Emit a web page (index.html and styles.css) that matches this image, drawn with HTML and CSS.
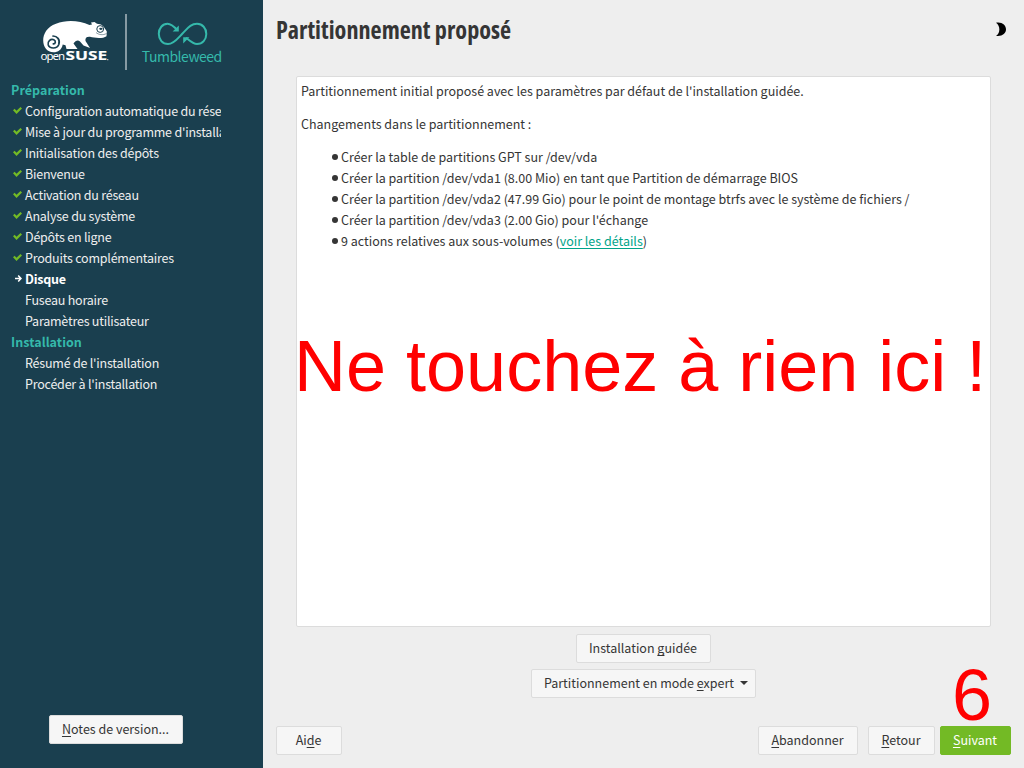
FILE: index.html
```html
<!DOCTYPE html>
<html lang="fr">
<head>
<meta charset="utf-8">
<title>Partitionnement proposé</title>
<link rel="stylesheet" href="styles.css">
</head>
<body>
<div class="window">
  <aside class="sidebar">
    <svg class="brand" width="200" height="60" viewBox="36 12 200 60">
      <path class="white" d="M53.500 52.300C47 52.300 43.200 47 43.200 40.500C43.200 34 47 27 56 23.800C66 19.700 79 20.300 89.500 25L92 24.500L91 22.500L94.500 22L97 23.800C101.500 23.800 104 26.500 106.800 31.500L106.500 36.200C103 38.800 95 38.200 90 36.800C86.500 36.500 85 38 85.500 41L90 48L83.500 45.500L80 41.500C78 39.500 75.500 40.500 73.500 43.500L77.500 49H66.500L65.500 45.200L62.700 44.500C62 49.500 58 52.300 53.500 52.300Z"/>
      <path class="curl" d="M53.300 43.800C55.500 44 56.300 41 53.800 39.800C50.500 38.500 47.300 41.500 48.200 44.800C49.500 49 57 49.200 58.800 44.500C60.500 39.500 57 36 53 36"/>
      <circle class="eye-ring" cx="100.200" cy="29" r="3.400"/>
      <ellipse class="eye" cx="100.900" cy="28.800" rx="1.700" ry="1.100"/>
      <path class="mouth" d="M106.500 33.500C103 35.500 98.500 34.800 96 32.500"/>
      <text class="open" x="40.500" y="60.300" textLength="24.500">open</text>
      <text class="suse" x="65.500" y="60.300" textLength="41.500" lengthAdjust="spacingAndGlyphs">SUSE</text>
      <circle class="white" cx="107.800" cy="59.700" r=".6"/>
      <path class="divider" d="M126 14V70"/>
      <path class="loop" d="M177.300 30.200C174 26.500 170.500 23.800 167.500 23.800C162.500 23.800 158.800 28.300 158.800 33.800C158.800 39.500 162.500 44 168 44C174 44 178 38 182.500 33.500C187.500 28.500 190.500 23.800 197 23.800C202.500 23.800 206.300 28.300 206.300 33.900C206.300 39.500 202.500 44 197 44C193 44 189.500 40.500 186 37.700"/>
      <path class="teal" d="M178.800 25.500V31.600H172.600ZM183.200 43.500V37.300H189.400Z"/>
      <text class="tumble" x="141.800" y="61.500" textLength="80.500">Tumbleweed</text>
    </svg>
    <ul class="steps">
      <li class="section">Préparation</li>
      <li class="done">Configuration automatique du réseau</li>
      <li class="done">Mise à jour du programme d'installation</li>
      <li class="done">Initialisation des dépôts</li>
      <li class="done">Bienvenue</li>
      <li class="done">Activation du réseau</li>
      <li class="done">Analyse du système</li>
      <li class="done">Dépôts en ligne</li>
      <li class="done">Produits complémentaires</li>
      <li class="current">Disque</li>
      <li>Fuseau horaire</li>
      <li>Paramètres utilisateur</li>
      <li class="section">Installation</li>
      <li>Résumé de l'installation</li>
      <li>Procéder à l'installation</li>
    </ul>
    <button class="btn notes"><span><u>N</u>otes de version...</span></button>
  </aside>
  <main class="main">
    <header class="header">
      <h1>Partitionnement proposé</h1>
      <svg class="moon" width="12" height="16" viewBox="0 0 12 16"><path d="M1 1.700C7 .7 11 4 11 8.300S7 15.800 1 14.900C5.500 12.300 5.500 4.700 1 1.700Z"/></svg>
    </header>
    <section class="report">
      <p>Partitionnement initial proposé avec les paramètres par défaut de l'installation guidée.</p>
      <p>Changements dans le partitionnement :</p>
      <ul class="actions">
        <li>Créer la table de partitions GPT sur /dev/vda</li>
        <li>Créer la partition /dev/vda1 (8.00 Mio) en tant que Partition de démarrage BIOS</li>
        <li>Créer la partition /dev/vda2 (47.99 Gio) pour le point de montage btrfs avec le système de fichiers /</li>
        <li>Créer la partition /dev/vda3 (2.00 Gio) pour l'échange</li>
        <li>9 actions relatives aux sous-volumes (<a>voir les détails</a>)</li>
      </ul>
    </section>
    <div class="choices">
      <button class="btn guided"><span>Installation <u>g</u>uidée</span></button>
      <button class="btn expert"><span>Partitionnement en mode <u>e</u>xpert</span><i class="caret"></i></button>
    </div>
    <footer class="footer">
      <button class="btn help"><span>Ai<u>d</u>e</span></button>
      <button class="btn abort"><span><u>A</u>bandonner</span></button>
      <button class="btn back"><span><u>R</u>etour</span></button>
      <button class="btn next"><span><u>S</u>uivant</span></button>
    </footer>
  </main>
  <div class="note warning">Ne touchez à rien ici !</div>
  <div class="note number">6</div>
</div>
</body>
</html>
```
FILE: styles.css
```css
* { box-sizing: border-box; }
body {
  margin: 0;
  font: 12.51px/21px "Noto Sans CJK JP", "Noto Sans", sans-serif;
  color: #353535;
}
ul { margin: 0; padding: 0; list-style: none; }
p, h1 { margin: 0; }
.window { position: relative; display: flex; width: 1024px; height: 768px; overflow: hidden; background: #eee; }

.sidebar { display: flex; flex-direction: column; width: 263px; padding: 12px 0 24px; background: #1a3f4f; color: #eee; }
.brand { display: block; margin-left: 36px; flex: none; }
.white { fill: #fff; }
.teal { fill: #35b9ab; }
.curl { fill: none; stroke: #1a3f4f; stroke-width: 1.7; stroke-linecap: round; }
.eye-ring { fill: none; stroke: #1a3f4f; stroke-width: 1; }
.eye { fill: #1a3f4f; }
.mouth { fill: none; stroke: #1a3f4f; stroke-width: .5; }
.open { font: 11.5px "Noto Sans", sans-serif; fill: #fff; }
.suse { font: bold 13px "Noto Sans", sans-serif; fill: #fff; stroke: #fff; stroke-width: .15; }
.divider { stroke: #a3b2b9; stroke-width: 1.6; }
.loop { fill: none; stroke: #35b9ab; stroke-width: 2; }
.tumble { font: 14px "Noto Sans CJK JP", sans-serif; fill: #35b9ab; }

.steps { width: 210px; margin: 7px 0 0 11px; overflow: hidden; white-space: nowrap; letter-spacing: -.22px; }
.steps li { position: relative; height: 21px; padding-left: 14px; }
.steps .section { padding-left: 0; color: #35b9ab; font-weight: bold; letter-spacing: .05px; }
.steps .current { color: #fff; font-weight: bold; }
.done::before {
  content: ""; position: absolute; left: 2px; top: 7px; width: 9px; height: 7px; background: #73ba25;
  clip-path: polygon(0 45%, 18% 24%, 39% 52%, 83% 0, 100% 22%, 39% 100%);
}
.current::before {
  content: ""; position: absolute; left: 4px; top: 7px; width: 7px; height: 7px; background: #fff;
  clip-path: polygon(0 40%, 60% 40%, 38% 14%, 54% 0, 100% 50%, 54% 100%, 38% 86%, 60% 60%, 0 60%);
}

.btn {
  display: flex; align-items: center; justify-content: center; height: 29px; padding: 0 1px 3px 0;
  border: 1px solid #dcdcdc; border-radius: 2px; background: #f6f6f6; color: #353535;
  font: inherit; white-space: nowrap;
}
.btn u { text-underline-offset: 2px; text-decoration-thickness: 1px; text-decoration-skip-ink: none; }
.notes { width: 134px; margin: auto 0 0 49px; }

.main { display: flex; flex-direction: column; flex: 1; padding: 0 13px 13px; }
.header { display: flex; justify-content: space-between; height: 76px; padding: 11px 4px 0 0; }
h1 { width: 243px; font: bold 25px/36px "Open Sans", sans-serif; font-stretch: 75%; white-space: nowrap; transform: scaleX(.967); transform-origin: 0 50%; }
.moon { margin-top: 10px; }
.report { height: 551px; margin: 0 20px; padding: 3px 4px; border: 1px solid #dcdcdc; border-radius: 2px; background: #fff; }
.report p { height: 21px; margin-bottom: 12px; white-space: nowrap; }
.actions li { position: relative; padding-left: 40px; white-space: nowrap; }
.actions li::before { content: ""; position: absolute; left: 31px; top: 8px; width: 6px; height: 6px; border-radius: 50%; background: #353535; }
.actions a { color: #00a489; text-decoration: underline; text-underline-offset: 2px; text-decoration-skip-ink: none; }
.choices { display: flex; flex-direction: column; align-items: center; gap: 6px; padding-top: 7px; }
.guided { width: 135px; }
.expert { width: 225px; gap: 6px; padding-left: 6px; }
.caret { margin-top: 2px; border: 4px solid transparent; border-top-color: #353535; border-bottom: 0; }
.footer { display: flex; margin-top: auto; }
.help { width: 66px; margin-right: auto; }
.abort { width: 100px; margin-right: 10px; }
.back { width: 67px; margin-right: 5px; }
.next { width: 71px; border-color: #73ba25; background: #73ba25; color: #fff; }

.note { position: absolute; font: 72px/83px "Liberation Sans", Arial, sans-serif; color: #f00; white-space: nowrap; }
.warning { left: 294px; top: 325px; }
.number { left: 952px; top: 669px; line-height: 52px; }
```
